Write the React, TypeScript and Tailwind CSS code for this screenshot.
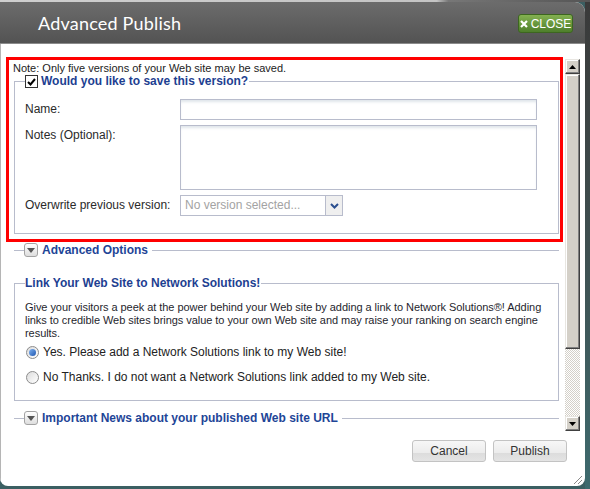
import React from 'react';

const line = 'border-[#b8bccc]';

const CollapseButton: React.FC = () => (
  <span className="w-[14px] h-[14px] shrink-0 rounded-[3px] border border-[#a3a3a3] bg-gradient-to-b from-white to-[#dedede] flex items-center justify-center">
    <svg width="8" height="5" viewBox="0 0 8 5">
      <path d="M0 0h8L4 5z" fill="#555" />
    </svg>
  </span>
);

const SectionRow: React.FC<{ title: string }> = ({ title }) => (
  <div className="ml-[8px] w-[545px] h-[14px] flex items-center">
    <span className={`w-[10px] border-t ${line}`} />
    <CollapseButton />
    <span className="px-[4px] text-[12px] font-bold text-[#1e4597] leading-[14px] whitespace-nowrap">{title}</span>
    <span className={`flex-1 border-t ${line}`} />
  </div>
);

const Radio: React.FC<{ checked?: boolean; label: string }> = ({ checked, label }) => (
  <label className="flex items-center h-[13px] gap-[4px]">
    <span className="w-[13px] h-[13px] rounded-full border border-[#8c8c8c] bg-gradient-to-br from-[#dcdcdc] to-white flex items-center justify-center">
      {checked && <span className="w-[7px] h-[7px] rounded-full bg-gradient-to-br from-[#7fb2f0] to-[#1f56b0]" />}
    </span>
    <span className="text-[12px] text-[#222] leading-[13px]">{label}</span>
  </label>
);

const ScrollButton: React.FC<{ up?: boolean }> = ({ up }) => (
  <div className="h-[15px] bg-[#d4d0c8] border border-t-[#e8e6e1] border-l-[#e8e6e1] border-r-[#404040] border-b-[#404040] shadow-[inset_-1px_-1px_0_#808080,inset_1px_1px_0_#fff] flex items-center justify-center">
    <svg width="7" height="4" viewBox="0 0 7 4">
      <path d={up ? 'M0 4h7L3.5 0z' : 'M0 0h7L3.5 4z'} fill="#000" />
    </svg>
  </div>
);

const FooterButton: React.FC<{ label: string }> = ({ label }) => (
  <button className="w-[74px] h-[22px] rounded-[3px] border border-[#c3c3c3] bg-[linear-gradient(#f7f7f7_0%,#ececec_58%,#dcdcdc_60%,#e4e4e4_100%)] text-[12px] text-[#333] leading-[20px]">
    {label}
  </button>
);

export default function App() {
  return (
    <div className="w-[590px] h-[489px] overflow-hidden flex flex-col bg-[#3b5f62] font-['Liberation_Sans',Arial,sans-serif]">
      <div className="h-[2px] shrink-0 bg-[linear-gradient(90deg,#cfcfcf_0%,#c4c4c4_74%,#777_76%,#555_100%)]" />
      <div className="flex flex-1">
        <div className="relative w-[585px] h-[484px] bg-white rounded-tr-[10px] rounded-b-[8px] overflow-hidden flex flex-col">
          {/* title bar */}
          <div className="h-[42px] shrink-0 bg-gradient-to-b from-[#6c6c6c] to-[#535353] border-b border-[#8b8b8b] flex items-center justify-between pl-[38px] pr-[12px]">
            <h1 className="text-[18px] text-white font-['Lato',sans-serif] tracking-[0.2px] pt-[2px]">Advanced Publish</h1>
            <button className="w-[55px] h-[19px] mt-[2px] rounded-[3px] border border-[#3d6620] bg-gradient-to-b from-[#84b151] to-[#4e7f2b] flex items-center justify-center gap-[3px] text-white text-[12px] leading-none">
              <svg width="8" height="8" viewBox="0 0 8 8">
                <path d="M1 1l6 6M7 1L1 7" stroke="#fff" strokeWidth="2.2" />
              </svg>
              CLOSE
            </button>
          </div>

          <div className="flex-1 flex flex-col border-l border-[#b5b5b5]">
            <div className="flex h-[388px] pt-[13px]">
              {/* scrolling content */}
              <div className="w-[563px] pl-[5px] overflow-hidden">
                <div className="w-[557px] h-[185px] border-[3px] border-[#ff0000]">
                  <p className="pl-[4px] pt-[2px] text-[11px] leading-[13px] text-[#222]">
                    Note: Only five versions of your Web site may be saved.
                  </p>
                  <fieldset className={`ml-[5px] w-[545px] h-[159px] border ${line} pl-[10px] pr-[20px]`}>
                    <legend className="flex items-center gap-[3px] pr-[1px]">
                      <span className="w-[13px] h-[13px] border border-[#333] bg-white flex items-center justify-center">
                        <svg width="9" height="8" viewBox="0 0 9 8">
                          <path d="M1 4l2.5 2.5L8 1" fill="none" stroke="#000" strokeWidth="2" />
                        </svg>
                      </span>
                      <span className="text-[12px] font-bold text-[#1e3f91] leading-[13px]">Would you like to save this version?</span>
                    </legend>
                    <div className="pt-[11px] grid grid-cols-[155px_357px] gap-y-[5px] text-[12px] text-[#2a2a2a]">
                      <span className="leading-[21px]">Name:</span>
                      <input className={`h-[21px] border ${line} bg-white shadow-[inset_0_3px_3px_-1px_#dfe5ea] outline-none`} />
                      <span className="leading-[21px]">Notes (Optional):</span>
                      <textarea className={`h-[65px] border ${line} bg-white shadow-[inset_0_3px_3px_-1px_#dfe5ea] outline-none resize-none`} />
                      <span className="leading-[21px]">Overwrite previous version:</span>
                      <div className={`w-[163px] h-[21px] border ${line} flex`}>
                        <span className="flex-1 pl-[4px] leading-[19px] text-[#a3a3a3]">No version selected...</span>
                        <span className={`w-[17px] border-l ${line} bg-[#efefef] flex items-center justify-center`}>
                          <svg width="9" height="6" viewBox="0 0 9 6">
                            <path d="M1 1l3.5 3.5L8 1" fill="none" stroke="#2b4f8f" strokeWidth="2" />
                          </svg>
                        </span>
                      </div>
                    </div>
                  </fieldset>
                </div>

                <div className="mt-[1px]">
                  <SectionRow title="Advanced Options" />
                </div>

                <fieldset className={`mt-[20px] ml-[8px] w-[545px] border ${line} pl-[10px] pr-[5px] pb-[16px]`}>
                  <legend className="pr-[1px] text-[12px] font-bold text-[#1e3f91] leading-[13px]">Link Your Web Site to Network Solutions!</legend>
                  <p className="pt-[11px] text-[11px] leading-[13px] text-[#1f1f2e] tracking-[-0.05px]">
                    Give your visitors a peek at the power behind your Web site by adding a link to Network Solutions®! Adding links to credible Web sites brings value to your own Web site and may raise your ranking on search engine results.
                  </p>
                  <div className="mt-[6px] flex flex-col gap-[12px] pl-[1px]">
                    <Radio checked label="Yes. Please add a Network Solutions link to my Web site!" />
                    <Radio label="No Thanks. I do not want a Network Solutions link added to my Web site." />
                  </div>
                </fieldset>

                <div className="mt-[10px]">
                  <SectionRow title="Important News about your published Web site URL" />
                </div>
              </div>

              {/* scrollbar */}
              <div className="w-[15px] h-[372px] mt-[2px] ml-[1px] flex flex-col">
                <ScrollButton up />
                <div className="h-[275px] bg-[#d4d0c8] border border-t-[#e8e6e1] border-l-[#e8e6e1] border-r-[#404040] border-b-[#404040] shadow-[inset_-1px_-1px_0_#808080,inset_1px_1px_0_#fff]" />
                <div className="flex-1 bg-[repeating-conic-gradient(#ffffff_0%_25%,#d4d0c8_0%_50%)] bg-[length:2px_2px]" />
                <ScrollButton />
              </div>
            </div>

            <div className="flex justify-end gap-[7px] pt-[8px] pr-[18px]">
              <FooterButton label="Cancel" />
              <FooterButton label="Publish" />
            </div>
          </div>

          {/* resize grip */}
          <svg className="absolute right-[2px] bottom-[1px]" width="11" height="11" viewBox="0 0 11 11">
            <path d="M10 2L2 10M10 6L6 10" stroke="#8a8a8a" strokeWidth="1" />
          </svg>
        </div>
        <div className="flex-1 bg-gradient-to-b from-[#3a3a3a] via-[#3f4f50] to-[#3d6a6e]" />
      </div>
    </div>
  );
}
